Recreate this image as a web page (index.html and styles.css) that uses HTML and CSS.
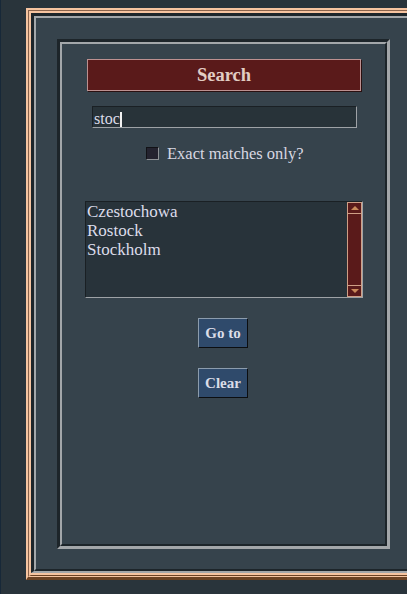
FILE: index.html
```html
<!DOCTYPE html>
<html>
<head>
<meta charset="utf-8">
<link rel="stylesheet" href="styles.css">
</head>
<body>
<div class="frame">
  <div class="fr2"><div class="fr3"><div class="fr4"><div class="fr5"><div class="fr6">
    <div class="panel"><div class="panel-in">
      <div class="search-bar">Search</div>
      <div class="entry"><span class="entry-text">stoc</span><span class="caret"></span></div>
      <div class="check-row"><span class="checkbox"></span><span class="check-label">Exact matches only?</span></div>
      <div class="listbox">
        <div class="list-items">
          <div class="item">Czestochowa</div>
          <div class="item">Rostock</div>
          <div class="item">Stockholm</div>
        </div>
        <div class="scrollbar">
          <div class="arrow arrow-up"><span class="tri-up"></span></div>
          <div class="trough"></div>
          <div class="arrow arrow-down"><span class="tri-down"></span></div>
        </div>
      </div>
      <div class="btn">Go to</div>
      <div class="btn">Clear</div>
    </div></div>
  </div></div></div></div></div>
</div>
</body>
</html>
```

FILE: styles.css
```css
html, body {
  margin: 0;
  padding: 0;
}
body {
  background: #29343b;
  height: 594px;
  overflow: hidden;
  box-sizing: border-box;
  border-left: 1px solid #172838;
  padding-top: 8px;
  font-family: "Liberation Serif", serif;
}
.frame {
  margin-left: 25px;
  width: 396px;
  box-sizing: border-box;
  border-style: solid;
  border-width: 2px 3px 3px 2px;
  border-color: #f6c4a0 #6c4324 #6c4324 #f6c4a0;
  background: #36434c;
}
.fr2 {
  border-style: solid;
  border-width: 1px;
  border-color: #8a624a #f6c4a0 #f6c4a0 #8a624a;
}
.fr3 {
  border-style: solid;
  border-width: 2px 1px 1px 2px;
  border-color: #f6c4a0 #6c4324 #6c4324 #f6c4a0;
}
.fr4 {
  border-style: solid;
  border-width: 0 2px 2px 0;
  border-color: #f6c4a0;
}
.fr5 {
  border-style: solid;
  border-width: 3px 2px 2px 3px;
  border-color: #1d252a #a3a7aa #a3a7aa #1d252a;
}
.fr6 {
  border-style: solid;
  border-width: 2px;
  border-color: #a3a7aa #1d252a #1d252a #a3a7aa;
  padding: 21px 20px 20px 21px;
}
.panel {
  width: 333px;
  height: 510px;
  box-sizing: border-box;
  border-style: solid;
  border-width: 3px;
  border-color: #1d252a #a3a7aa #a3a7aa #1d252a;
}
.panel-in {
  height: 100%;
  box-sizing: border-box;
  border-style: solid;
  border-width: 2px;
  border-color: #a3a7aa #1d252a #1d252a #a3a7aa;
  display: flex;
  flex-direction: column;
  align-items: flex-start;
}
.search-bar {
  margin: 15px 0 0 25px;
  width: 274px;
  height: 32px;
  box-sizing: border-box;
  background: #5a1a1a;
  border: 1px solid #bc9090;
  box-shadow: 1px 1px 0 #2a1010;
  color: #e2cdc4;
  font-weight: bold;
  font-size: 18.5px;
  line-height: 30px;
  text-align: center;
}
.entry {
  margin: 15px 0 0 30px;
  width: 265px;
  height: 22px;
  box-sizing: border-box;
  background: #283339;
  border-style: solid;
  border-width: 1px;
  border-color: #1a2024 #9ea2a6 #9ea2a6 #1a2024;
  padding: 3px 0 0 1px;
  display: flex;
  align-items: flex-start;
  color: #dcdcea;
  font-size: 16px;
  line-height: 18px;
}
.caret {
  width: 2px;
  height: 15px;
  margin-top: 2px;
  background: #f2f2f2;
}
.check-row {
  margin: 16px 0 0 84px;
  height: 20px;
  display: flex;
  align-items: center;
  gap: 8px;
  color: #d8d8e2;
  font-size: 16.5px;
  line-height: 20px;
}
.checkbox {
  width: 13px;
  height: 13px;
  box-sizing: border-box;
  background: #24232f;
  border-style: solid;
  border-width: 1px;
  border-color: #121216 #8e9296 #8e9296 #121216;
  margin-top: -1px;
}
.listbox {
  margin: 37px 0 0 23px;
  width: 278px;
  height: 97px;
  box-sizing: border-box;
  background: #28333a;
  border-style: solid;
  border-width: 1px;
  border-color: #1a2024 #9ea2a6 #9ea2a6 #1a2024;
  display: flex;
}
.list-items {
  flex: 1;
  padding-left: 1px;
  color: #dcdcea;
  font-size: 17px;
  line-height: 19px;
}
.scrollbar {
  width: 15px;
  box-sizing: border-box;
  background: #5a1a1a;
  border: 1px solid #cf9f86;
  display: flex;
  flex-direction: column;
}
.arrow {
  height: 10px;
  display: flex;
  align-items: center;
  justify-content: center;
}
.arrow-up {
  border-bottom: 1px solid #cf9f86;
}
.arrow-down {
  border-top: 1px solid #cf9f86;
}
.trough {
  flex: 1;
}
.tri-up {
  width: 0;
  height: 0;
  border-left: 4px solid transparent;
  border-right: 4px solid transparent;
  border-bottom: 4px solid #c98a5a;
}
.tri-down {
  width: 0;
  height: 0;
  border-left: 4px solid transparent;
  border-right: 4px solid transparent;
  border-top: 4px solid #c98a5a;
}
.btn {
  margin: 20px 0 0 136px;
  width: 50px;
  height: 30px;
  box-sizing: border-box;
  background: #2f4a6b;
  border-style: solid;
  border-width: 1px;
  border-color: #8c9cad #0c0e10 #0c0e10 #8c9cad;
  color: #dadde8;
  font-weight: bold;
  font-size: 15px;
  line-height: 28px;
  text-align: center;
}
```
